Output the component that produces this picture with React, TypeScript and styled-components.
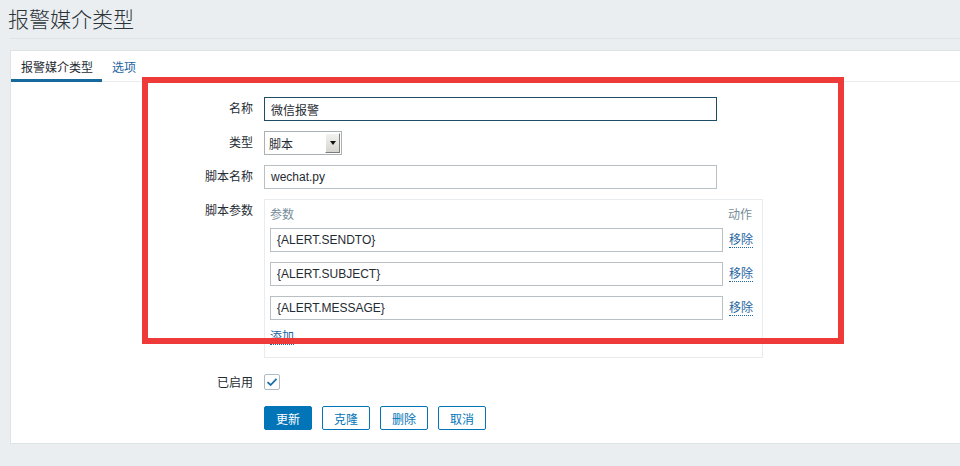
import React from "react";
import styled, { createGlobalStyle } from "styled-components";

const Global = createGlobalStyle`
  html, body { margin: 0; padding: 0; }
  body {
    background: #ebeef0;
    font-family: "Liberation Sans", Arial, "Noto Sans CJK SC", sans-serif;
    font-size: 12px;
    color: #1f2c33;
    width: 960px;
    height: 466px;
    overflow: hidden;
  }
`;

const Page = styled.div`
  position: relative;
  width: 960px;
  height: 466px;
`;

const Header = styled.header`
  margin: 0 0 0 10px;
  height: 38px;
  border-bottom: 1px solid #dde3e6;
  display: flex;
  align-items: center;
`;

const Title = styled.div`
  margin: 0 0 0 -2px;
  font-size: 21px;
  font-weight: 300;
  color: #2a3338;
  font-family: "Noto Sans CJK SC", sans-serif;
  line-height: 24px;
  padding-bottom: 2px;
`;

const Panel = styled.section`
  margin: 11px 0 0 10px;
  height: 394px;
  background: #fff;
  border: 1px solid #dfe4e7;
  border-right: none;
  box-sizing: border-box;
`;

const TabBar = styled.nav`
  display: flex;
  height: 31px;
  border-bottom: 1px solid #ebeef0;
  box-sizing: border-box;
`;

const Tab = styled.a<{ $active?: boolean }>`
  display: flex;
  align-items: center;
  padding: 0 9px 0 10px;
  height: 31px;
  box-sizing: border-box;
  border-bottom: 3px solid ${(p) => (p.$active ? "#16699c" : "transparent")};
  color: ${(p) => (p.$active ? "#1f2c33" : "#1f65a0")};
  padding-top: 3px;
  margin-bottom: -1px;
  cursor: pointer;
`;

const Form = styled.div`
  display: grid;
  grid-template-columns: 242px 1fr;
  column-gap: 11px;
  row-gap: 10px;
  padding-top: 15px;
  align-items: start;
`;

const Label = styled.label<{ $top?: number; $lh?: number }>`
  text-align: right;
  line-height: ${(p) => p.$lh ?? 24}px;
  padding-top: ${(p) => p.$top ?? 0}px;
  color: #1f2c33;
`;

const Cell = styled.div<{ $top?: number; $h?: number }>`
  display: flex;
  align-items: center;
  min-height: ${(p) => p.$h ?? 24}px;
  margin-top: ${(p) => p.$top ?? 0}px;
`;

const TextInput = styled.div<{ $focus?: boolean; $w?: number }>`
  width: ${(p) => p.$w ?? 453}px;
  height: 24px;
  box-sizing: border-box;
  border: 1px solid ${(p) => (p.$focus ? "#1f4d66" : "#b8c0c4")};
  padding: 0 6px;
  display: flex;
  align-items: center;
  font-size: 12px;
  color: #1f2c33;
  background: #fff;
`;

const Select = styled.div`
  width: 78px;
  height: 24px;
  box-sizing: border-box;
  border: 1px solid #aab1b5;
  display: flex;
  align-items: stretch;
  background: #fff;
`;

const SelectText = styled.div`
  flex: 1;
  display: flex;
  align-items: center;
  padding-left: 4px;
`;

const SelectBtn = styled.div`
  width: 15px;
  margin: 1px;
  background: linear-gradient(#f2f2f0, #d6d5cf);
  border: 1px solid;
  border-color: #fff #7d7d7d #7d7d7d #fff;
  box-sizing: border-box;
  display: flex;
  align-items: center;
  justify-content: center;
`;

const Arrow = styled.div`
  width: 0;
  height: 0;
  border-left: 3.5px solid transparent;
  border-right: 3.5px solid transparent;
  border-top: 4px solid #111;
`;

const ParamTable = styled.div`
  width: 499px;
  box-sizing: border-box;
  border: 1px solid #e8ecee;
  padding: 5px 6px 6px 5px;
`;

const ParamHead = styled.div`
  display: flex;
  justify-content: space-between;
  color: #768d99;
  line-height: 18px;
  height: 18px;
  margin-top: 1px;
  padding-right: 4px;
`;

const ParamRows = styled.div`
  display: flex;
  flex-direction: column;
  gap: 10px;
  margin-top: 4px;
`;

const ParamRow = styled.div`
  display: flex;
  align-items: center;
`;

const LinkBtn = styled.a`
  color: #1f65a0;
  border-bottom: 1px dotted #1f65a0;
  line-height: 14px;
  cursor: pointer;
  margin-left: 6px;
`;

const AddLink = styled.a`
  display: inline-block;
  color: #1f65a0;
  border-bottom: 1px dotted #1f65a0;
  line-height: 14px;
  margin-top: 10px;
  margin-bottom: 6px;
`;

const Check = styled.div`
  width: 16px;
  height: 16px;
  box-sizing: border-box;
  border: 1px solid #acbbc2;
  border-radius: 2px;
  display: flex;
  align-items: center;
  justify-content: center;
  background: #fff;
`;

const Buttons = styled.div`
  display: flex;
  gap: 10px;
`;

const Button = styled.button<{ $primary?: boolean }>`
  height: 24px;
  width: 48px;
  padding: 0;
  box-sizing: border-box;
  border: 1px solid #0275b8;
  border-radius: 2px;
  background: ${(p) => (p.$primary ? "#0275b8" : "#fff")};
  color: ${(p) => (p.$primary ? "#fff" : "#0275b8")};
  font-family: "Liberation Sans", "Noto Sans CJK SC", sans-serif;
  font-size: 12px;
  cursor: pointer;
`;

const Annotation = styled.div`
  position: absolute;
  left: 142px;
  top: 77px;
  width: 702px;
  height: 267px;
  box-sizing: border-box;
  border: 6px solid #ef3a3a;
  pointer-events: none;
`;

const params = ["{ALERT.SENDTO}", "{ALERT.SUBJECT}", "{ALERT.MESSAGE}"];

export default function App() {
  return (
    <Page>
      <Global />
      <Header>
        <Title>报警媒介类型</Title>
      </Header>
      <Panel>
        <TabBar>
          <Tab $active>报警媒介类型</Tab>
          <Tab>选项</Tab>
        </TabBar>
        <Form>
          <Label>名称</Label>
          <Cell>
            <TextInput $focus>微信报警</TextInput>
          </Cell>

          <Label>类型</Label>
          <Cell>
            <Select>
              <SelectText>脚本</SelectText>
              <SelectBtn>
                <Arrow />
              </SelectBtn>
            </Select>
          </Cell>

          <Label>脚本名称</Label>
          <Cell>
            <TextInput>wechat.py</TextInput>
          </Cell>

          <Label>脚本参数</Label>
          <Cell>
            <ParamTable>
              <ParamHead>
                <span>参数</span>
                <span>动作</span>
              </ParamHead>
              <ParamRows>
                {params.map((p) => (
                  <ParamRow key={p}>
                    <TextInput $w={453}>{p}</TextInput>
                    <LinkBtn>移除</LinkBtn>
                  </ParamRow>
                ))}
              </ParamRows>
              <AddLink>添加</AddLink>
            </ParamTable>
          </Cell>

          <Label $top={6} $lh={18}>已启用</Label>
          <Cell $top={6} $h={16}>
            <Check>
              <svg width="12" height="10" viewBox="0 0 12 10">
                <path d="M1.5 5.2 L4.6 8 L10.5 1.8" fill="none" stroke="#1f6fa8" strokeWidth="1.8" />
              </svg>
            </Check>
          </Cell>

          <div />
          <Cell $top={4}>
            <Buttons>
              <Button $primary>更新</Button>
              <Button>克隆</Button>
              <Button>删除</Button>
              <Button>取消</Button>
            </Buttons>
          </Cell>
        </Form>
      </Panel>
      <Annotation />
    </Page>
  );
}
